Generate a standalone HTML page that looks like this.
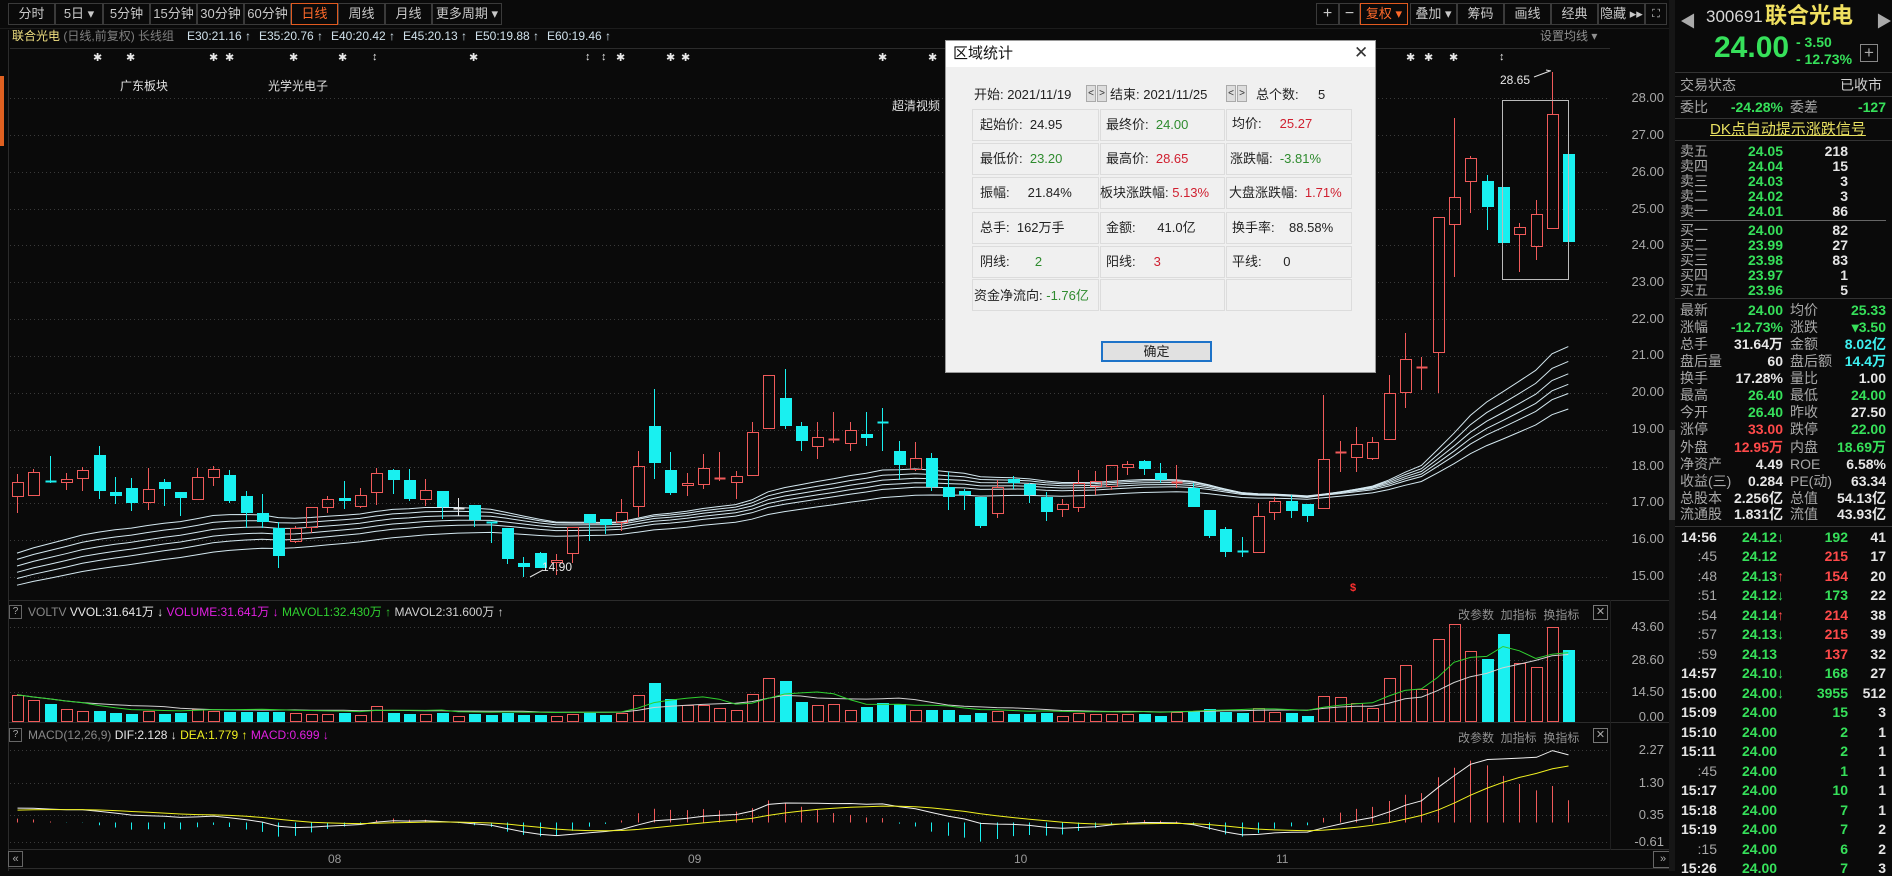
<!DOCTYPE html>
<html><head><meta charset="utf-8">
<style>
*{margin:0;padding:0;box-sizing:border-box}
body{width:1892px;height:871px;background:#0a0a0a;overflow:hidden;position:relative;font-family:"Liberation Sans","Noto Sans CJK SC",sans-serif;color:#c8c8c8}
.a{position:absolute;white-space:nowrap}
.btn{position:absolute;top:3px;height:22px;border:1px solid #3a3a3a;color:#c8c8c8;font-size:13px;line-height:20px;text-align:center}
.g{color:#36e05a}.r{color:#ff4a4a}.w{color:#e6e6e6}.cy{color:#3ef0f0}.gr{color:#a8a8a8}
.rp{position:absolute;font-size:14px;font-weight:bold;line-height:16px;white-space:nowrap}
.lb{position:absolute;font-size:14px;line-height:16px;color:#a8a8a8;white-space:nowrap}
.ax{position:absolute;font-size:13px;color:#a8a8a8;width:50px;text-align:right;left:1614px;line-height:14px}
.dl{position:absolute;background:#f0f0f0;border:1px solid #dcdcdc}
.dt{position:absolute;font-size:13px;color:#222;line-height:16px;white-space:nowrap}
.st{position:absolute;color:#e8e8e8;font-size:11px;top:51px}
</style></head><body>
<svg id="sv" width="1892" height="871" style="position:absolute;left:0;top:0"></svg>

<!-- left strip -->
<div class="a" style="left:0;top:76px;width:4px;height:70px;background:#e06020"></div>

<!-- toolbar left -->
<div class="btn" style="left:8px;width:47px">分时</div>
<div class="btn" style="left:55px;width:48px">5日 ▾</div>
<div class="btn" style="left:103px;width:47px">5分钟</div>
<div class="btn" style="left:150px;width:47px">15分钟</div>
<div class="btn" style="left:197px;width:47px">30分钟</div>
<div class="btn" style="left:244px;width:47px">60分钟</div>
<div class="btn" style="left:291px;width:47px;border-color:#e05a20;color:#ff6a2a">日线</div>
<div class="btn" style="left:338px;width:47px">周线</div>
<div class="btn" style="left:385px;width:47px">月线</div>
<div class="btn" style="left:432px;width:70px">更多周期 ▾</div>
<!-- toolbar right -->
<div class="btn" style="left:1316px;width:23px;font-size:16px">+</div>
<div class="btn" style="left:1339px;width:21px;font-size:16px">−</div>
<div class="btn" style="left:1360px;width:48px;border-color:#e05a20;color:#ff6a2a">复权 ▾</div>
<div class="btn" style="left:1410px;width:47px">叠加 ▾</div>
<div class="btn" style="left:1457px;width:47px">筹码</div>
<div class="btn" style="left:1504px;width:47px">画线</div>
<div class="btn" style="left:1551px;width:47px">经典</div>
<div class="btn" style="left:1598px;width:47px">隐藏 ▸▸</div>
<div class="btn" style="left:1645px;width:22px;font-size:11px">⛶</div>

<!-- title row -->
<div class="a" style="left:12px;top:29px;font-size:12px;line-height:14px"><span style="color:#f0e080">联合光电</span> <span style="color:#808080">(日线,前复权)</span> <span style="color:#808080">长线组</span></div>
<div class="a" style="left:187px;top:29px;font-size:12px;line-height:14px;color:#cfe0ea">E30:21.16 ↑</div>
<div class="a" style="left:259px;top:29px;font-size:12px;line-height:14px;color:#cfe0ea">E35:20.76 ↑</div>
<div class="a" style="left:331px;top:29px;font-size:12px;line-height:14px;color:#cfe0ea">E40:20.42 ↑</div>
<div class="a" style="left:403px;top:29px;font-size:12px;line-height:14px;color:#cfe0ea">E45:20.13 ↑</div>
<div class="a" style="left:475px;top:29px;font-size:12px;line-height:14px;color:#cfe0ea">E50:19.88 ↑</div>
<div class="a" style="left:547px;top:29px;font-size:12px;line-height:14px;color:#cfe0ea">E60:19.46 ↑</div>
<div class="a" style="left:1540px;top:29px;font-size:12px;line-height:14px;color:#909090">设置均线 ▾</div>

<!-- stars -->
<div class="st" style="left:93px">✱</div><div class="st" style="left:126px">✱</div>
<div class="st" style="left:209px">✱</div><div class="st" style="left:225px">✱</div>
<div class="st" style="left:289px">✱</div><div class="st" style="left:338px">✱</div>
<div class="st" style="left:372px">↕</div><div class="st" style="left:469px">✱</div>
<div class="st" style="left:585px">↕</div><div class="st" style="left:601px">↕</div>
<div class="st" style="left:616px">✱</div><div class="st" style="left:666px">✱</div>
<div class="st" style="left:681px">✱</div><div class="st" style="left:878px">✱</div>
<div class="st" style="left:928px">✱</div><div class="st" style="left:1406px">✱</div>
<div class="st" style="left:1424px">✱</div><div class="st" style="left:1449px">✱</div>
<div class="st" style="left:1499px">↕</div>

<div class="a" style="left:120px;top:77px;font-size:12px;color:#e0e0e0">广东板块</div>
<div class="a" style="left:268px;top:77px;font-size:12px;color:#e0e0e0">光学光电子</div>
<div class="a" style="left:892px;top:97px;font-size:12px;color:#e0e0e0">超清视频</div>
<div class="a" style="left:1500px;top:73px;font-size:12px;color:#e8e8e8">28.65</div>
<div class="a" style="left:542px;top:560px;font-size:12px;color:#e8e8e8">14.90</div>
<div class="a" style="left:1350px;top:582px;font-size:11px;color:#ff3030;font-weight:bold">$</div>

<!-- price axis -->
<div class="ax" style="top:91px">28.00</div><div class="ax" style="top:128px">27.00</div>
<div class="ax" style="top:165px">26.00</div><div class="ax" style="top:202px">25.00</div>
<div class="ax" style="top:238px">24.00</div><div class="ax" style="top:275px">23.00</div>
<div class="ax" style="top:312px">22.00</div><div class="ax" style="top:348px">21.00</div>
<div class="ax" style="top:385px">20.00</div><div class="ax" style="top:422px">19.00</div>
<div class="ax" style="top:459px">18.00</div><div class="ax" style="top:495px">17.00</div>
<div class="ax" style="top:532px">16.00</div><div class="ax" style="top:569px">15.00</div>
<div class="ax" style="top:620px">43.60</div><div class="ax" style="top:653px">28.60</div>
<div class="ax" style="top:685px">14.50</div><div class="ax" style="top:710px">0.00</div>
<div class="ax" style="top:743px">2.27</div><div class="ax" style="top:776px">1.30</div>
<div class="ax" style="top:808px">0.35</div><div class="ax" style="top:835px">-0.61</div>

<!-- volume header -->
<div class="a" style="left:9px;top:605px;width:13px;height:14px;border:1px solid #666;font-size:10px;line-height:12px;text-align:center;color:#aaa">?</div>
<div class="a" style="left:28px;top:605px;font-size:12px;line-height:14px"><span style="color:#888">VOLTV</span> <span style="color:#e8e8e8">VVOL:31.641万 ↓</span> <span style="color:#e020e0">VOLUME:31.641万 ↓</span> <span style="color:#30d030">MAVOL1:32.430万 ↑</span> <span style="color:#d0d0d0">MAVOL2:31.600万 ↑</span></div>
<div class="a" style="left:1458px;top:606px;font-size:12px;color:#909090">改参数 &nbsp;加指标 &nbsp;换指标</div>
<div class="a" style="left:1593px;top:605px;width:15px;height:15px;border:1px solid #777;font-size:11px;line-height:13px;text-align:center;color:#aaa">✕</div>
<!-- macd header -->
<div class="a" style="left:9px;top:728px;width:13px;height:14px;border:1px solid #666;font-size:10px;line-height:12px;text-align:center;color:#aaa">?</div>
<div class="a" style="left:28px;top:728px;font-size:12px;line-height:14px"><span style="color:#888">MACD(12,26,9)</span> <span style="color:#e8e8e8">DIF:2.128 ↓</span> <span style="color:#f0f020">DEA:1.779 ↑</span> <span style="color:#e020e0">MACD:0.699 ↓</span></div>
<div class="a" style="left:1458px;top:729px;font-size:12px;color:#909090">改参数 &nbsp;加指标 &nbsp;换指标</div>
<div class="a" style="left:1593px;top:728px;width:15px;height:15px;border:1px solid #777;font-size:11px;line-height:13px;text-align:center;color:#aaa">✕</div>

<!-- bottom axis -->
<div class="a" style="left:8px;top:851px;width:15px;height:16px;border:1px solid #666;font-size:11px;line-height:14px;text-align:center;color:#aaa">«</div>
<div class="a" style="left:1653px;top:851px;width:20px;height:17px;border:1px solid #666;font-size:11px;line-height:15px;text-align:center;color:#aaa">»</div>
<div class="a" style="left:328px;top:852px;font-size:12px;color:#999">08</div>
<div class="a" style="left:688px;top:852px;font-size:12px;color:#999">09</div>
<div class="a" style="left:1014px;top:852px;font-size:12px;color:#999">10</div>
<div class="a" style="left:1276px;top:852px;font-size:12px;color:#999">11</div>

<!-- dialog -->
<div class="a" style="left:945px;top:40px;width:431px;height:333px;background:#f0f0f0;border:1px solid #9a9a9a">
 <div style="position:absolute;left:0;top:0;width:429px;height:26px;background:#fff"></div>
 <div class="dt" style="left:7px;top:4px;font-size:15px;line-height:18px;color:#111">区域统计</div>
 <div class="dt" style="left:408px;top:2px;font-size:17px;line-height:20px;color:#333">✕</div>
</div>
<div class="dt" style="left:974px;top:87px">开始: 2021/11/19</div>
<div class="a" style="left:1086px;top:85px;width:10px;height:17px;border:1px solid #aaa;background:#ddd;font-size:10px;line-height:15px;text-align:center;color:#333">&lt;</div>
<div class="a" style="left:1097px;top:85px;width:10px;height:17px;border:1px solid #aaa;background:#ddd;font-size:10px;line-height:15px;text-align:center;color:#333">&gt;</div>
<div class="dt" style="left:1110px;top:87px">结束: 2021/11/25</div>
<div class="a" style="left:1226px;top:85px;width:10px;height:17px;border:1px solid #aaa;background:#ddd;font-size:10px;line-height:15px;text-align:center;color:#333">&lt;</div>
<div class="a" style="left:1237px;top:85px;width:10px;height:17px;border:1px solid #aaa;background:#ddd;font-size:10px;line-height:15px;text-align:center;color:#333">&gt;</div>
<div class="dt" style="left:1256px;top:87px">总个数:</div>
<div class="dt" style="left:1318px;top:87px">5</div>

<div class="dl" style="left:972px;top:109px;width:127px;height:32px"></div>
<div class="dl" style="left:1100px;top:109px;width:125px;height:32px"></div>
<div class="dl" style="left:1226px;top:109px;width:126px;height:32px"></div>
<div class="dl" style="left:972px;top:143px;width:127px;height:32px"></div>
<div class="dl" style="left:1100px;top:143px;width:125px;height:32px"></div>
<div class="dl" style="left:1226px;top:143px;width:126px;height:32px"></div>
<div class="dl" style="left:972px;top:177px;width:127px;height:32px"></div>
<div class="dl" style="left:1100px;top:177px;width:125px;height:32px"></div>
<div class="dl" style="left:1226px;top:177px;width:126px;height:32px"></div>
<div class="dl" style="left:972px;top:212px;width:127px;height:32px"></div>
<div class="dl" style="left:1100px;top:212px;width:125px;height:32px"></div>
<div class="dl" style="left:1226px;top:212px;width:126px;height:32px"></div>
<div class="dl" style="left:972px;top:246px;width:127px;height:32px"></div>
<div class="dl" style="left:1100px;top:246px;width:125px;height:32px"></div>
<div class="dl" style="left:1226px;top:246px;width:126px;height:32px"></div>
<div class="dl" style="left:972px;top:279px;width:127px;height:32px"></div>
<div class="dl" style="left:1100px;top:279px;width:125px;height:32px"></div>
<div class="dl" style="left:1226px;top:279px;width:126px;height:32px"></div>

<div class="dt" style="left:980px;top:117px">起始价: &nbsp;24.95</div>
<div class="dt" style="left:1106px;top:117px">最终价: &nbsp;<span style="color:#2e8b2e">24.00</span></div>
<div class="dt" style="left:1232px;top:116px">均价: &nbsp; &nbsp; <span style="color:#d02030">25.27</span></div>
<div class="dt" style="left:980px;top:151px">最低价: &nbsp;<span style="color:#2e8b2e">23.20</span></div>
<div class="dt" style="left:1106px;top:151px">最高价: &nbsp;<span style="color:#d02030">28.65</span></div>
<div class="dt" style="left:1230px;top:151px">涨跌幅: &nbsp;<span style="color:#2e8b2e">-3.81%</span></div>
<div class="dt" style="left:980px;top:185px">振幅: &nbsp; &nbsp; 21.84%</div>
<div class="dt" style="left:1100px;top:185px">板块涨跌幅: <span style="color:#d02030">5.13%</span></div>
<div class="dt" style="left:1229px;top:185px">大盘涨跌幅: &nbsp;<span style="color:#d02030">1.71%</span></div>
<div class="dt" style="left:980px;top:220px">总手: &nbsp;162万手</div>
<div class="dt" style="left:1106px;top:220px">金额: &nbsp; &nbsp; &nbsp;41.0亿</div>
<div class="dt" style="left:1232px;top:220px">换手率: &nbsp; &nbsp;88.58%</div>
<div class="dt" style="left:980px;top:254px">阴线: &nbsp; &nbsp; &nbsp; <span style="color:#2e8b2e">2</span></div>
<div class="dt" style="left:1106px;top:254px">阳线: &nbsp; &nbsp; <span style="color:#d02030">3</span></div>
<div class="dt" style="left:1232px;top:254px">平线: &nbsp; &nbsp; &nbsp;0</div>
<div class="dt" style="left:974px;top:288px">资金净流向: <span style="color:#2e8b2e">-1.76亿</span></div>
<div class="a" style="left:1101px;top:341px;width:111px;height:21px;border:2px solid #1e73c8;background:#e1e1e1;font-size:13px;line-height:17px;text-align:center;color:#222">确定</div>

<!-- right panel -->
<div class="a" style="left:1669px;top:0;width:6px;height:871px;background:#161616"></div>
<div class="a" style="left:1669px;top:430px;width:6px;height:90px;background:#3a3a3a"></div>
<div class="a" style="left:1680px;top:8px;font-size:16px;color:#aaa">◀</div>
<div class="a" style="left:1876px;top:8px;font-size:16px;color:#aaa">▶</div>
<div class="a" style="left:1706px;top:6px;font-size:17px;line-height:22px;color:#d8d8d8">300691</div>
<div class="a" style="left:1765px;top:3px;font-size:22px;line-height:26px;color:#f0e060;font-weight:bold">联合光电</div>
<div class="a g" style="left:1714px;top:31px;font-size:30px;line-height:34px;font-weight:bold">24.00</div>
<div class="rp g" style="left:1796px;top:34px">- 3.50</div>
<div class="rp g" style="left:1796px;top:51px">- 12.73%</div>
<div class="a" style="left:1860px;top:44px;width:18px;height:18px;border:1px solid #888;color:#aaa;font-size:17px;line-height:15px;text-align:center">+</div>
<div class="a" style="left:1675px;top:72px;width:217px;height:1px;background:#333"></div>
<div class="lb" style="left:1680px;top:77px">交易状态</div>
<div class="lb" style="left:1840px;top:77px;color:#d0d0d0">已收市</div>
<div class="a" style="left:1675px;top:96px;width:217px;height:1px;background:#333"></div>
<div class="lb" style="left:1680px;top:99px">委比</div>
<div class="rp g" style="right:109px;top:99px">-24.28%</div>
<div class="lb" style="left:1790px;top:99px">委差</div>
<div class="rp g" style="right:6px;top:99px">-127</div>
<div class="a" style="left:1675px;top:118px;width:217px;height:1px;background:#333"></div>
<div class="a" style="left:1710px;top:121px;font-size:15px;line-height:18px;color:#e8e060;text-decoration:underline">DK点自动提示涨跌信号</div>
<div class="a" style="left:1675px;top:140px;width:217px;height:1px;background:#333"></div>

<div class="lb" style="left:1680px;top:143px">卖五</div><div class="rp g" style="right:109px;top:143px">24.05</div><div class="rp w" style="right:44px;top:143px">218</div>
<div class="lb" style="left:1680px;top:158px">卖四</div><div class="rp g" style="right:109px;top:158px">24.04</div><div class="rp w" style="right:44px;top:158px">15</div>
<div class="lb" style="left:1680px;top:173px">卖三</div><div class="rp g" style="right:109px;top:173px">24.03</div><div class="rp w" style="right:44px;top:173px">3</div>
<div class="lb" style="left:1680px;top:188px">卖二</div><div class="rp g" style="right:109px;top:188px">24.02</div><div class="rp w" style="right:44px;top:188px">3</div>
<div class="lb" style="left:1680px;top:203px">卖一</div><div class="rp g" style="right:109px;top:203px">24.01</div><div class="rp w" style="right:44px;top:203px">86</div>
<div class="a" style="left:1680px;top:220px;width:206px;height:1px;background:#666"></div>
<div class="lb" style="left:1680px;top:222px">买一</div><div class="rp g" style="right:109px;top:222px">24.00</div><div class="rp w" style="right:44px;top:222px">82</div>
<div class="lb" style="left:1680px;top:237px">买二</div><div class="rp g" style="right:109px;top:237px">23.99</div><div class="rp w" style="right:44px;top:237px">27</div>
<div class="lb" style="left:1680px;top:252px">买三</div><div class="rp g" style="right:109px;top:252px">23.98</div><div class="rp w" style="right:44px;top:252px">83</div>
<div class="lb" style="left:1680px;top:267px">买四</div><div class="rp g" style="right:109px;top:267px">23.97</div><div class="rp w" style="right:44px;top:267px">1</div>
<div class="lb" style="left:1680px;top:282px">买五</div><div class="rp g" style="right:109px;top:282px">23.96</div><div class="rp w" style="right:44px;top:282px">5</div>
<div class="a" style="left:1675px;top:298px;width:217px;height:1px;background:#333"></div>

<div class="lb" style="left:1680px;top:302px">最新</div><div class="rp g" style="right:109px;top:302px">24.00</div><div class="lb" style="left:1790px;top:302px">均价</div><div class="rp g" style="right:6px;top:302px">25.33</div>
<div class="lb" style="left:1680px;top:319px">涨幅</div><div class="rp g" style="right:109px;top:319px">-12.73%</div><div class="lb" style="left:1790px;top:319px">涨跌</div><div class="rp g" style="right:6px;top:319px">▾3.50</div>
<div class="lb" style="left:1680px;top:336px">总手</div><div class="rp w" style="right:109px;top:336px">31.64万</div><div class="lb" style="left:1790px;top:336px">金额</div><div class="rp cy" style="right:6px;top:336px">8.02亿</div>
<div class="lb" style="left:1680px;top:353px">盘后量</div><div class="rp w" style="right:109px;top:353px">60</div><div class="lb" style="left:1790px;top:353px">盘后额</div><div class="rp cy" style="right:6px;top:353px">14.4万</div>
<div class="lb" style="left:1680px;top:370px">换手</div><div class="rp w" style="right:109px;top:370px">17.28%</div><div class="lb" style="left:1790px;top:370px">量比</div><div class="rp w" style="right:6px;top:370px">1.00</div>
<div class="lb" style="left:1680px;top:387px">最高</div><div class="rp g" style="right:109px;top:387px">26.40</div><div class="lb" style="left:1790px;top:387px">最低</div><div class="rp g" style="right:6px;top:387px">24.00</div>
<div class="lb" style="left:1680px;top:404px">今开</div><div class="rp g" style="right:109px;top:404px">26.40</div><div class="lb" style="left:1790px;top:404px">昨收</div><div class="rp w" style="right:6px;top:404px">27.50</div>
<div class="lb" style="left:1680px;top:421px">涨停</div><div class="rp r" style="right:109px;top:421px">33.00</div><div class="lb" style="left:1790px;top:421px">跌停</div><div class="rp g" style="right:6px;top:421px">22.00</div>
<div class="lb" style="left:1680px;top:439px">外盘</div><div class="rp r" style="right:109px;top:439px">12.95万</div><div class="lb" style="left:1790px;top:439px">内盘</div><div class="rp g" style="right:6px;top:439px">18.69万</div>
<div class="lb" style="left:1680px;top:456px">净资产</div><div class="rp w" style="right:109px;top:456px">4.49</div><div class="lb" style="left:1790px;top:456px">ROE</div><div class="rp w" style="right:6px;top:456px">6.58%</div>
<div class="lb" style="left:1680px;top:473px">收益(三)</div><div class="rp w" style="right:109px;top:473px">0.284</div><div class="lb" style="left:1790px;top:473px">PE(动)</div><div class="rp w" style="right:6px;top:473px">63.34</div>
<div class="lb" style="left:1680px;top:490px">总股本</div><div class="rp w" style="right:109px;top:490px">2.256亿</div><div class="lb" style="left:1790px;top:490px">总值</div><div class="rp w" style="right:6px;top:490px">54.13亿</div>
<div class="lb" style="left:1680px;top:506px">流通股</div><div class="rp w" style="right:109px;top:506px">1.831亿</div><div class="lb" style="left:1790px;top:506px">流值</div><div class="rp w" style="right:6px;top:506px">43.93亿</div>
<div class="a" style="left:1675px;top:526px;width:217px;height:1px;background:#333"></div>

<div class="rp w" style="left:1681px;top:529px">14:56</div><div class="rp g" style="left:1742px;top:529px">24.12<span>↓</span></div><div class="rp g" style="right:44px;top:529px">192</div><div class="rp w" style="right:6px;top:529px">41</div>
<div class="rp gr" style="right:175px;top:548px;font-weight:normal">:45</div><div class="rp g" style="left:1742px;top:548px">24.12</div><div class="rp r" style="right:44px;top:548px">215</div><div class="rp w" style="right:6px;top:548px">17</div>
<div class="rp gr" style="right:175px;top:568px;font-weight:normal">:48</div><div class="rp g" style="left:1742px;top:568px">24.13<span class="r">↑</span></div><div class="rp r" style="right:44px;top:568px">154</div><div class="rp w" style="right:6px;top:568px">20</div>
<div class="rp gr" style="right:175px;top:587px;font-weight:normal">:51</div><div class="rp g" style="left:1742px;top:587px">24.12↓</div><div class="rp g" style="right:44px;top:587px">173</div><div class="rp w" style="right:6px;top:587px">22</div>
<div class="rp gr" style="right:175px;top:607px;font-weight:normal">:54</div><div class="rp g" style="left:1742px;top:607px">24.14<span class="r">↑</span></div><div class="rp r" style="right:44px;top:607px">214</div><div class="rp w" style="right:6px;top:607px">38</div>
<div class="rp gr" style="right:175px;top:626px;font-weight:normal">:57</div><div class="rp g" style="left:1742px;top:626px">24.13↓</div><div class="rp r" style="right:44px;top:626px">215</div><div class="rp w" style="right:6px;top:626px">39</div>
<div class="rp gr" style="right:175px;top:646px;font-weight:normal">:59</div><div class="rp g" style="left:1742px;top:646px">24.13</div><div class="rp r" style="right:44px;top:646px">137</div><div class="rp w" style="right:6px;top:646px">32</div>
<div class="rp w" style="left:1681px;top:665px">14:57</div><div class="rp g" style="left:1742px;top:665px">24.10↓</div><div class="rp g" style="right:44px;top:665px">168</div><div class="rp w" style="right:6px;top:665px">27</div>
<div class="rp w" style="left:1681px;top:685px">15:00</div><div class="rp g" style="left:1742px;top:685px">24.00↓</div><div class="rp g" style="right:44px;top:685px">3955</div><div class="rp w" style="right:6px;top:685px">512</div>
<div class="rp w" style="left:1681px;top:704px">15:09</div><div class="rp g" style="left:1742px;top:704px">24.00</div><div class="rp g" style="right:44px;top:704px">15</div><div class="rp w" style="right:6px;top:704px">3</div>
<div class="rp w" style="left:1681px;top:724px">15:10</div><div class="rp g" style="left:1742px;top:724px">24.00</div><div class="rp g" style="right:44px;top:724px">2</div><div class="rp w" style="right:6px;top:724px">1</div>
<div class="rp w" style="left:1681px;top:743px">15:11</div><div class="rp g" style="left:1742px;top:743px">24.00</div><div class="rp g" style="right:44px;top:743px">2</div><div class="rp w" style="right:6px;top:743px">1</div>
<div class="rp gr" style="right:175px;top:763px;font-weight:normal">:45</div><div class="rp g" style="left:1742px;top:763px">24.00</div><div class="rp g" style="right:44px;top:763px">1</div><div class="rp w" style="right:6px;top:763px">1</div>
<div class="rp w" style="left:1681px;top:782px">15:17</div><div class="rp g" style="left:1742px;top:782px">24.00</div><div class="rp g" style="right:44px;top:782px">10</div><div class="rp w" style="right:6px;top:782px">1</div>
<div class="rp w" style="left:1681px;top:802px">15:18</div><div class="rp g" style="left:1742px;top:802px">24.00</div><div class="rp g" style="right:44px;top:802px">7</div><div class="rp w" style="right:6px;top:802px">1</div>
<div class="rp w" style="left:1681px;top:821px">15:19</div><div class="rp g" style="left:1742px;top:821px">24.00</div><div class="rp g" style="right:44px;top:821px">7</div><div class="rp w" style="right:6px;top:821px">2</div>
<div class="rp gr" style="right:175px;top:841px;font-weight:normal">:15</div><div class="rp g" style="left:1742px;top:841px">24.00</div><div class="rp g" style="right:44px;top:841px">6</div><div class="rp w" style="right:6px;top:841px">2</div>
<div class="rp w" style="left:1681px;top:860px">15:26</div><div class="rp g" style="left:1742px;top:860px">24.00</div><div class="rp g" style="right:44px;top:860px">7</div><div class="rp w" style="right:6px;top:860px">3</div>

<script>
var S='';
function L(x1,y1,x2,y2,c,w,d){S+='<line x1="'+x1+'" y1="'+y1+'" x2="'+x2+'" y2="'+y2+'" stroke="'+c+'" stroke-width="'+(w||1)+'"'+(d?' stroke-dasharray="'+d+'"':'')+'/>';}
function R(x,y,w,h,f,s){S+='<rect x="'+x+'" y="'+y+'" width="'+w+'" height="'+h+'" fill="'+(f||'none')+'"'+(s?' stroke="'+s+'"':'')+'/>';}
function P(pts,c){S+='<polyline fill="none" stroke="'+c+'" stroke-width="1" points="'+pts.join(' ')+'"/>';}
// grids
for(var p=28;p>=15;p--){var y=Math.round(98+(28-p)*36.85)+.5;L(10,y,1610,y,'#3a3a3a',1,'1 3');}
[627,660,692].forEach(function(y){L(10,y+.5,1610,y+.5,'#3a3a3a',1,'1 3');});
[750,783,815,842].forEach(function(y){L(10,y+.5,1610,y+.5,'#3a3a3a',1,'1 3');});
// separators
L(10,48.5,1610,48.5,'#2c2c2c');L(0,28.5,1669,28.5,'#1c1c1c');
L(8,600.5,1669,600.5,'#2c2c2c');L(8,722.5,1669,722.5,'#2c2c2c');
L(8,849.5,1669,849.5,'#2c2c2c');L(8,868.5,1669,868.5,'#2c2c2c');
L(8.5,30,8.5,871,'#2c2c2c');L(1610.5,600,1610.5,850,'#1e1e1e');
var D=[[482,497,474,513,'r'],[472,496,469,496,'r'],[481,482,456,483,'c'],[479,483,473,490,'r'],[470,479,467,491,'r'],[455,491,446,499,'c'],[492,496,477,504,'c'],[488,503,478,511,'c'],[489,503,468,510,'r'],[482,489,479,506,'c'],[492,498,492,516,'c'],[477,500,468,500,'r'],[469,478,466,486,'r'],[475,501,470,503,'c'],[496,513,491,528,'c'],[513,522,494,528,'c'],[528,556,522,568,'c'],[528,542,526,543,'r'],[507,528,507,533,'r'],[499,508,496,513,'r'],[498,501,481,509,'c'],[495,507,488,508,'r'],[473,493,468,505,'r'],[470,480,469,494,'c'],[480,499,469,501,'c'],[490,500,479,506,'r'],[491,507,491,519,'c'],[508,509,498,516,'w'],[505,520,505,527,'c'],[522,523,522,543,'c'],[528,559,528,564,'c'],[563,567,557,577,'c'],[553,568,552,568,'c'],[560,563,554,575,'r'],[527,554,527,563,'r'],[514,523,514,541,'c'],[519,525,519,534,'c'],[512,523,499,531,'r'],[466,507,451,517,'r'],[426,463,389,479,'c'],[470,493,452,495,'c'],[483,486,473,496,'r'],[468,485,454,489,'r'],[478,480,452,481,'r'],[476,483,471,499,'r'],[432,476,422,476,'r'],[375,429,375,429,'r'],[398,426,369,429,'c'],[426,441,422,451,'c'],[437,447,422,459,'r'],[439,441,412,443,'r'],[430,444,422,451,'r'],[434,438,412,446,'c'],[422,424,408,451,'c'],[451,465,441,480,'c'],[458,470,442,471,'r'],[458,487,453,491,'c'],[487,497,472,510,'c'],[491,495,489,510,'c'],[497,526,497,528,'c'],[487,514,480,518,'r'],[479,483,476,489,'c'],[484,495,483,503,'c'],[497,512,492,521,'c'],[504,510,499,517,'r'],[483,508,470,512,'r'],[481,487,471,495,'r'],[465,487,465,490,'r'],[464,468,461,475,'r'],[461,469,460,475,'c'],[473,480,463,483,'c'],[482,484,465,488,'r'],[488,507,483,507,'c'],[510,536,510,538,'c'],[529,552,527,557,'c'],[551,553,537,557,'c'],[516,553,503,553,'r'],[501,513,497,520,'r'],[501,511,495,518,'c'],[504,516,504,522,'c'],[459,509,395,509,'r'],[452,454,441,472,'r'],[444,458,427,472,'r'],[442,459,437,460,'r'],[393,440,375,440,'r'],[359,393,333,408,'r'],[367,369,357,390,'r'],[217,353,217,393,'r'],[197,225,118,277,'r'],[158,182,156,213,'r'],[181,207,175,230,'c'],[187,243,187,243,'c'],[227,235,223,272,'r'],[214,247,200,260,'r'],[114,229,72,229,'r'],[154,242,154,242,'c']];
var V=[27,22,18,13,11,11,9,8,11,8,9,13,11,10,10,10,10,9,8,8,9,7,16,9,8,8,9,6,8,7,9,7,7,6,8,9,7,9,27,39,23,17,
17,14,12,28,44,41,20,17,18,12,15,19,18,12,12,12,7,9,11,8,8,9,6,9,8,8,8,8,6,10,11,13,10,9,14,10,9,6,26,25,19,14,
44,57,33,83,98,71,63,88,59,55,95,72];
var X0=17,DX=16.33,RED='#f05a5a',CY='#19f0f0';
function pr(y){return 28-(y-98)/36.85;} function yp(p){return 98+(28-p)*36.85;}
var closes=[];
// EMA lines
var seeds=[[30,15.65],[35,15.48],[40,15.3],[45,15.13],[50,14.96],[60,14.78]];
D.forEach(function(d){closes.push(pr(d[4]=='c'?d[1]:d[0]));});
seeds.forEach(function(s){var e=s[1],k=2/(s[0]+1),pts=[];closes.forEach(function(c,i){if(i>0)e=e+k*(c-e);pts.push((X0+i*DX).toFixed(1)+','+yp(e).toFixed(1));});P(pts,'#d4e8f0');});
// candles
D.forEach(function(d,i){var x=Math.round(X0+i*DX)+.5,bt=d[0],bb=d[1],wt=d[2],wb=d[3],c=d[4];
 var col=c=='r'?RED:(c=='c'?CY:'#e8e8e8');
 if(bb-bt<=2){L(x,wt,x,wb,col);L(x-5,bt+.5,x+6,bt+.5,col,2);return;}
 if(c=='r'){L(x,wt,x,bt,col);L(x,bb,x,wb,col);R(x-5,bt+.5,11,bb-bt-1,'none',col);}
 else{L(x,wt,x,wb,col);R(x-5.5,bt,12,bb-bt,col);}
});
// box + label arrow
R(1502.5,100.5,66,179,'none','#bbbbbb');
L(1534,77,1550,71,'#e0e0e0');L(1546,70,1551,71,'#e0e0e0');
L(530,577,543,570,'#e0e0e0');
// volume
var vb=722,m5=[],m10=[];
D.forEach(function(d,i){var x=Math.round(X0+i*DX),h=V[i],col=d[4]=='c'?CY:RED;
 if(d[4]=='c')R(x-5,vb-h,12,h,CY);else R(x-4.5,vb-h+.5,11,h-1,'none',RED);});
function ma(n,c){var pts=[];for(var i=0;i<V.length;i++){var s=0,k=0;for(var j=Math.max(0,i-n+1);j<=i;j++){s+=V[j];k++;}pts.push((X0+i*DX).toFixed(1)+','+(vb-s/k*0.9-3).toFixed(1));}P(pts,c);}
ma(10,'#d0d0d0');ma(5,'#30d030');
// macd
var e12=17.45,e26=17.0,dea=0.39,z=822.5,sc=31.9,pd=[],pe=[];
closes.forEach(function(c,i){if(i>0){e12+=2/13*(c-e12);e26+=2/27*(c-e26);}var dif=e12-e26;if(i>0)dea+=0.2*(dif-dea);var h=2*(dif-dea),x=Math.round(X0+i*DX)+.5;
 L(x,z,x,z-h*sc,h>=0?RED:CY);pd.push(x+','+(z-dif*sc).toFixed(1));pe.push(x+','+(z-dea*sc).toFixed(1));});
P(pd,'#f0f0f0');P(pe,'#f0f020');
document.getElementById('sv').innerHTML=S;
</script>
</body></html>
